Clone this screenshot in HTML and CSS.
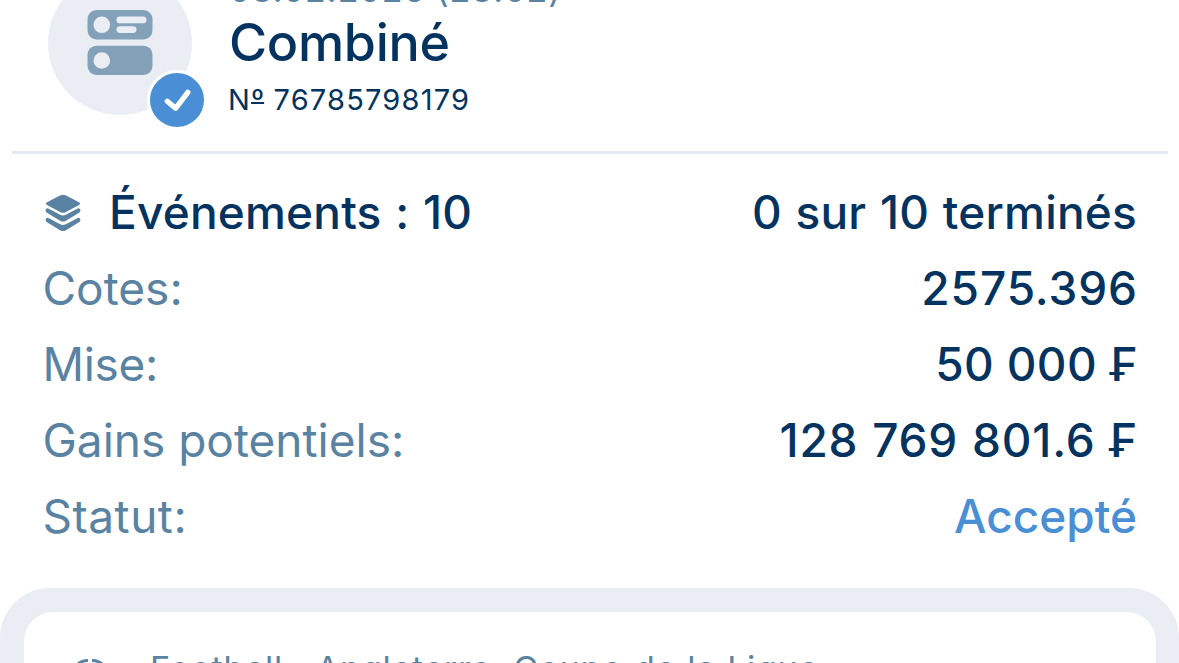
FILE: index.html
```html
<!DOCTYPE html>
<html lang="fr">
<head>
    <meta charset="UTF-8">
    <meta name="viewport" content="width=device-width, initial-scale=1.0">
    <title>Combiné</title>
    <link rel="stylesheet" href="styles.css">
</head>
<body>
    <div class="coupon-header">
        <div class="avatar">
            <svg class="avatar-icon" width="66" height="66" viewBox="0 0 66 66">
                <rect class="block" x="0.500" y="0" width="65" height="29.500" rx="9"/>
                <rect class="block" x="0.500" y="35.700" width="65" height="29.300" rx="9"/>
                <circle class="hole" cx="14.800" cy="14.800" r="8.300"/>
                <circle class="hole" cx="14.800" cy="50.500" r="8.300"/>
                <rect class="hole" x="29.500" y="6.500" width="30" height="6.800" rx="3.400"/>
                <rect class="hole" x="29.500" y="16.200" width="20" height="6.800" rx="3.400"/>
            </svg>
            <div class="badge">
                <svg width="54" height="54" viewBox="0 0 54 54">
                    <path d="M17.300 28.300l8.300 7L37.800 19.300"/>
                </svg>
            </div>
        </div>
        <div class="coupon-title">
            <p class="date">08.02.2026 (23:02)</p>
            <h1>Combiné</h1>
            <p class="number">N<span class="ordinal">º</span> 76785798179</p>
        </div>
    </div>

    <div class="info">
        <div class="row">
            <svg class="layers" width="36" height="38" viewBox="0 0 36 38">
                <path d="M15.500 1.200a6 6 0 0 1 5 0L34 8.200q2.200 1.400 0 2.800l-13.500 7.300a6 6 0 0 1-5 0L2 11q-2.200-1.400 0-2.800z"/>
                <path d="M1.200 14.800q1-.9 2.600 0l11.400 5.900a6 6 0 0 0 5.600 0l11.400-5.900q1.600-.9 2.600 0 1.600 2.400-.8 4L20.500 27a6 6 0 0 1-5 0L2 18.800q-2.400-1.600-.8-4z"/>
                <path d="M1.200 24.300q1-.9 2.600 0l11.400 5.900a6 6 0 0 0 5.600 0l11.400-5.900q1.600-.9 2.600 0 1.600 2.400-.8 4L20.500 36.500a6 6 0 0 1-5 0L2 28.300q-2.400-1.600-.8-4z"/>
            </svg>
            <span class="events">Événements : 10</span>
            <span class="value finished">0 sur 10 terminés</span>
        </div>
        <div class="row">
            <span class="label">Cotes:</span>
            <span class="value odds">2575.396</span>
        </div>
        <div class="row">
            <span class="label mise">Mise:</span>
            <span class="value stake">50 000 ₣</span>
        </div>
        <div class="row">
            <span class="label">Gains potentiels:</span>
            <span class="value money">128 769 801.6 ₣</span>
        </div>
        <div class="row">
            <span class="label statut">Statut:</span>
            <span class="value status">Accepté</span>
        </div>
    </div>

    <div class="games">
        <div class="game">
            <svg class="ball" width="36" height="36" viewBox="0 0 36 36">
                <path d="M5 15Q9 10.500 16 10.500M20 10.500Q27 10.500 31 15M5 15q-4 9 2 16M31 15q4 9-2 16"/>
            </svg>
            <span class="league">Football.&nbsp; Angleterre. Coupe de la Ligue</span>
        </div>
    </div>
</body>
</html>
```
FILE: styles.css
```css
body {
    margin: 0;
    height: 663px;
    overflow: hidden;
    background: #fff;
    color: #04335f;
    font-family: Inter, "Liberation Sans", sans-serif;
}

p, h1 {
    margin: 0;
}

.coupon-header {
    display: flex;
    height: 151px;
    margin: 0 11px 0 12px;
    padding-left: 36px;
    border-bottom: 3px solid #e6e9f2;
}

.avatar {
    position: relative;
    width: 144px;
    height: 144px;
    margin-top: -29px;
    border-radius: 50%;
    background: #eaedf3;
}

.avatar-icon {
    display: block;
    margin: 39px 0 0 39px;
}

.avatar-icon .block {
    fill: #84a1ba;
}

.avatar-icon .hole {
    fill: #eaedf3;
}

/* accepted mark over the corner of the avatar */
.badge {
    position: absolute;
    right: -15px;
    bottom: -15px;
    width: 54px;
    height: 54px;
    border: 3px solid #fff;
    border-radius: 50%;
    background: #4a8fd6;
}

.badge path {
    fill: none;
    stroke: #fff;
    stroke-width: 5.2;
    stroke-linecap: round;
    stroke-linejoin: round;
}

.coupon-title {
    margin: -30px 0 0 37px;
    white-space: nowrap;
}

.date {
    margin-bottom: 2px;
    font-size: 34px;
    line-height: 40px;
    letter-spacing: 1px;
    color: #5a83a3;
}

.coupon-title h1 {
    font-size: 52px;
    font-weight: 500;
    line-height: 62px;
    letter-spacing: -0.3px;
}

.number {
    margin-left: -1px;
    font-size: 29px;
    line-height: 52px;
    letter-spacing: 1.2px;
}

.ordinal {
    letter-spacing: 0;
    text-decoration: underline;
    text-decoration-thickness: 2px;
    text-decoration-skip-ink: none;
    text-underline-offset: -8px;
}

.info {
    padding: 20px 42px 0 43px;
}

.row {
    display: flex;
    align-items: center;
    height: 76px;
    font-size: 46px;
    font-feature-settings: "calt" 0;
    white-space: nowrap;
}

.layers {
    margin: 2px 28px 0 2px;
    fill: #5a83a3;
}

.events,
.value {
    font-weight: 500;
}

.events,
.finished {
    letter-spacing: 0.2px;
    word-spacing: 1.2px;
}

.value {
    margin-left: auto;
}

.odds {
    margin-right: -1px;
    letter-spacing: 0.9px;
}

.stake {
    letter-spacing: 0.4px;
}

.money {
    letter-spacing: 0.8px;
    word-spacing: 0.8px;
}

.stake,
.money {
    margin-right: -1px;
}

.label {
    margin-left: -0.5px;
    color: #5a83a3;
}

.mise {
    letter-spacing: -0.3px;
}

.statut {
    letter-spacing: 0.5px;
}

.status {
    color: #4a8fd6;
}

.games {
    height: 200px;
    margin-top: 34px;
    padding: 24px 23px 24px 24px;
    border-radius: 50px;
    background: #eaedf3;
}

.game {
    display: flex;
    align-items: center;
    height: 64px;
    padding: 24px 48px 76px;
    border-radius: 29px;
    background: #fff;
    white-space: nowrap;
}

.ball {
    margin-right: 42px;
    fill: none;
    stroke: #5a83a3;
    stroke-width: 3;
}

.league {
    font-size: 34px;
    letter-spacing: 0.7px;
    word-spacing: 1px;
    color: #5a83a3;
}
```
